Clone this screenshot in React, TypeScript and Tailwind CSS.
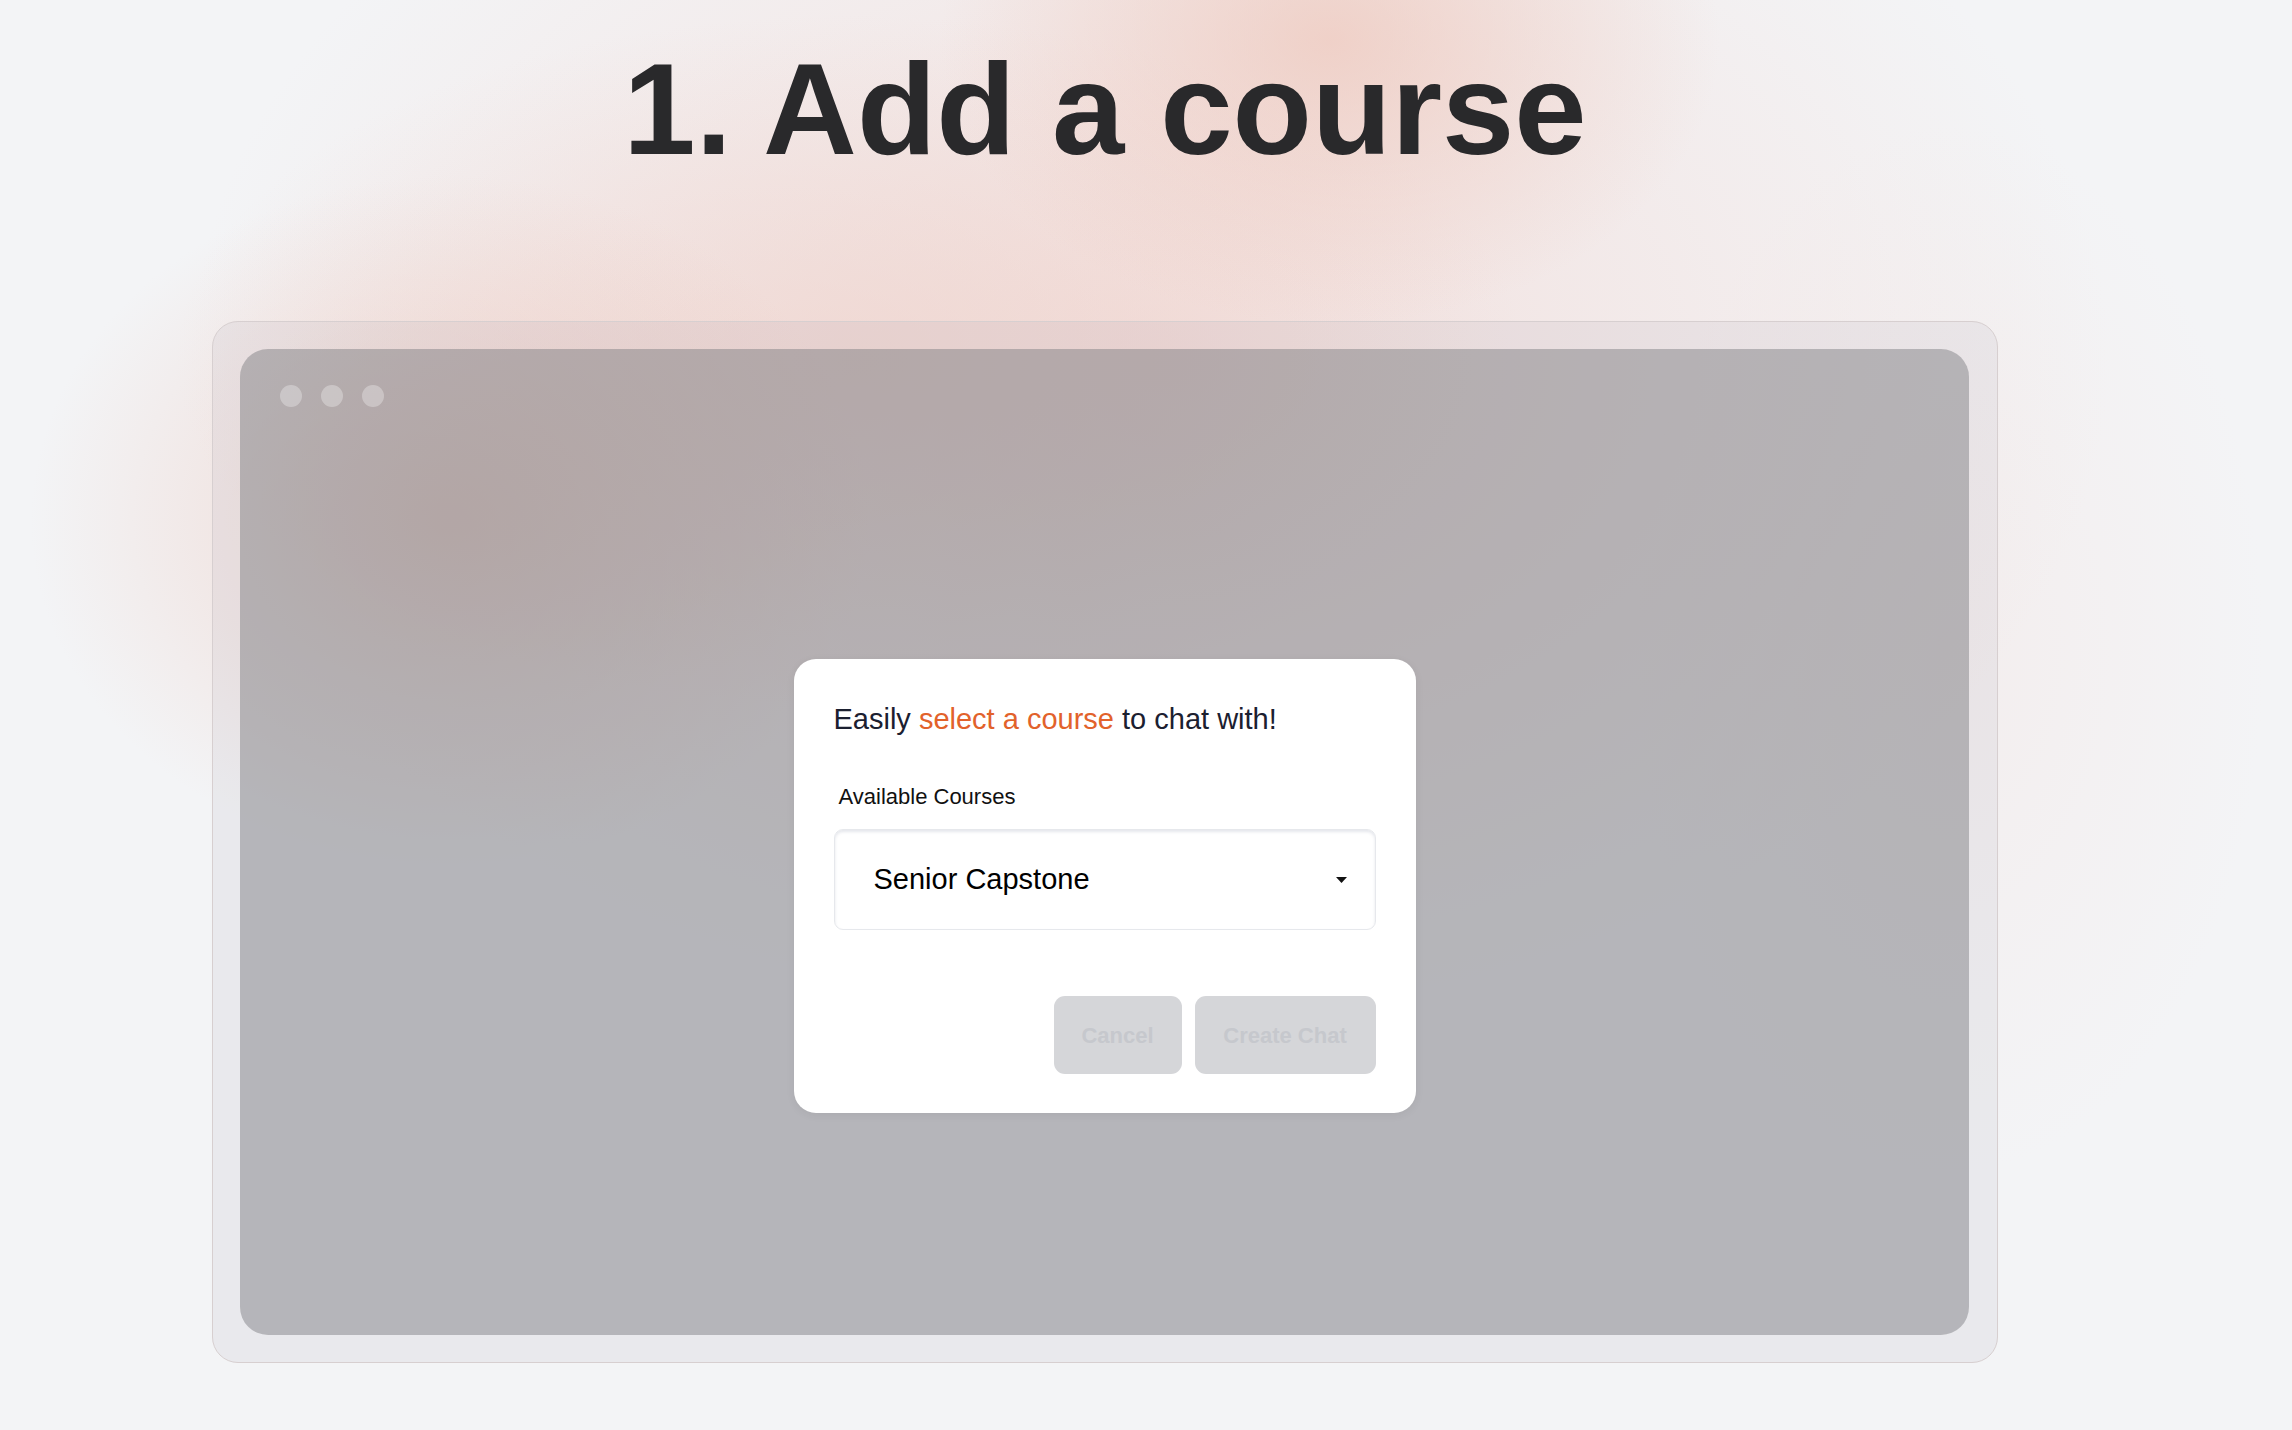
const Caret = () => (
    <svg width="11" height="6" viewBox="0 0 11 6" aria-hidden="true">
        <path d="M0 0 L11 0 L5.5 6 Z" fill="#111" />
    </svg>
)

const CourseModal = () => {
    return (
        <div className="mt-[252px] w-[622px] rounded-[22px] bg-white pt-[46px] px-[40px] pb-[39px] shadow-[0_2px_10px_rgba(0,0,0,0.06)]">
            <h2 className="text-[29px] leading-none text-[#1b2030]">
                Easily <span className="text-[#e2622b]">select a course</span> to chat with!
            </h2>
            <p className="mt-[52px] ml-[5px] text-[22px] leading-none text-[#111]">Available Courses</p>
            <div className="mt-[21px] h-[101px] flex items-center justify-between rounded-[9px] border border-[#e6e8ec] pl-[39px] pr-[28px] shadow-[inset_0_2px_3px_rgba(110,120,150,0.18)]">
                <span className="text-[29px] leading-none text-black">Senior Capstone</span>
                <Caret />
            </div>
            <div className="mt-[66px] flex justify-end gap-[13px]">
                <button className="w-[128px] h-[78px] rounded-[11px] bg-[#d5d6d9] text-[22px] font-bold text-[#c6c8cd]">
                    Cancel
                </button>
                <button className="w-[181px] h-[78px] rounded-[11px] bg-[#d5d6d9] text-[22px] font-bold text-[#c6c8cd]">
                    Create Chat
                </button>
            </div>
        </div>
    )
}

export default function App() {
    return (
        <div className="min-h-screen w-full bg-[#f3f4f6] bg-[radial-gradient(ellipse_520px_380px_at_1330px_40px,rgba(238,198,186,0.7),transparent_75%),radial-gradient(ellipse_560px_460px_at_450px_520px,rgba(236,196,184,0.6),transparent_75%),radial-gradient(ellipse_900px_460px_at_850px_360px,rgba(238,206,198,0.55),transparent_75%),radial-gradient(ellipse_1200px_820px_at_1150px_360px,rgba(242,218,214,0.8),transparent_80%),radial-gradient(ellipse_420px_700px_at_1950px_650px,rgba(243,230,228,0.45),transparent_75%)] font-['Liberation_Sans',Arial,sans-serif]">
            <div className="flex flex-col items-center pr-[82px] pt-[44px] pb-[68px]">
                <h1 className="text-[130px] leading-none font-bold text-[#29292b]">1. Add a course</h1>
                <div className="mt-[147px] w-[1786px] h-[1042px] rounded-[26px] border border-[#d7cfd0] bg-[rgba(120,115,135,0.08)] pt-[27px] pl-[27px] pb-[27px] pr-[28px]">
                    <div className="h-full rounded-[28px] bg-[rgba(125,126,129,0.48)] flex flex-col items-center">
                        <div className="self-start flex gap-[19px] pl-[40px] pt-[36px]">
                            <span className="w-[22px] h-[22px] rounded-full bg-white/30" />
                            <span className="w-[22px] h-[22px] rounded-full bg-white/30" />
                            <span className="w-[22px] h-[22px] rounded-full bg-white/30" />
                        </div>
                        <CourseModal />
                    </div>
                </div>
            </div>
        </div>
    )
}
